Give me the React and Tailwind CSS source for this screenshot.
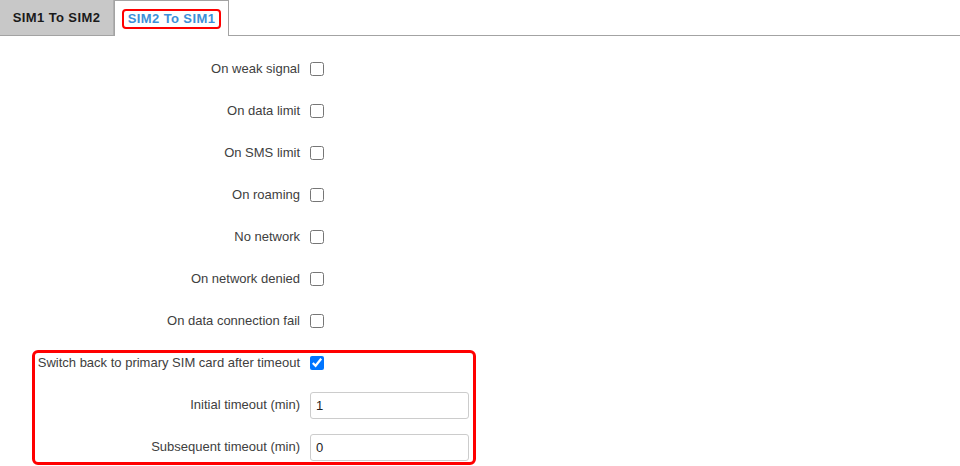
import React from 'react'

const rows = [
  'On weak signal',
  'On data limit',
  'On SMS limit',
  'On roaming',
  'No network',
  'On network denied',
  'On data connection fail',
]

function Row({ label, children }){
  return (
    <div className="grid grid-cols-[300px_1fr] gap-x-[10px] h-[42px] items-center">
      <label className="text-right text-[13px] text-[#404040]">{label}</label>
      <div className="flex items-center">{children}</div>
    </div>
  )
}

export default function App(){
  return (
    <div className="w-[960px] h-[466px] bg-white overflow-hidden" style={{ fontFamily: '"Liberation Sans", Arial, sans-serif' }}>
      <div className="flex h-[36px] border-b border-[#a3a3a3]">
        <div className="w-[114px] h-[35px] bg-[#c8c8c8] flex items-center justify-center text-[13px] font-bold text-[#1a1a1a] tracking-[0.4px] border-r border-[#b0b0b0]">
          SIM1 To SIM2
        </div>
        <div className="w-[115px] h-[36px] bg-white border border-b-0 border-[#a3a3a3] flex justify-center pt-[8px] -mb-px">
          <span className="h-[20px] px-[4px] border-2 border-[#ff0000] rounded-[4px] text-[13px] font-bold text-[#3d8fd8] leading-[16px] tracking-[0.4px]">
            SIM2 To SIM1
          </span>
        </div>
      </div>

      <div className="relative pt-[12px]">
        {rows.map(r => (
          <Row key={r} label={r}>
            <input type="checkbox" className="w-[14px] h-[14px] m-0" />
          </Row>
        ))}
        <Row label="Switch back to primary SIM card after timeout">
          <input type="checkbox" defaultChecked className="w-[14px] h-[14px] m-0" />
        </Row>
        <Row label="Initial timeout (min)">
          <input type="text" defaultValue="1" className="w-[159px] h-[27px] border border-[#cccccc] rounded-[3px] px-[5px] text-[13px] text-[#222] outline-none" />
        </Row>
        <Row label="Subsequent timeout (min)">
          <input type="text" defaultValue="0" className="w-[159px] h-[27px] border border-[#cccccc] rounded-[3px] px-[5px] text-[13px] text-[#222] outline-none" />
        </Row>
        <div className="absolute left-[32px] top-[314px] w-[444px] h-[115px] border-[3px] border-[#ff0000] rounded-[6px] pointer-events-none" />
      </div>
    </div>
  )
}
